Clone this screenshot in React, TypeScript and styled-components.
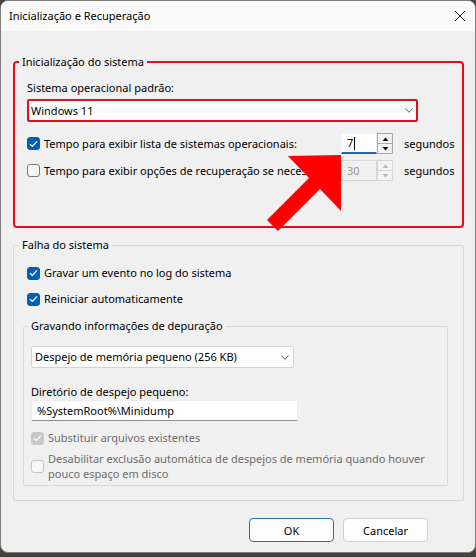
import React from "react";
import styled, { createGlobalStyle } from "styled-components";

const GlobalStyle = createGlobalStyle`
  html, body { margin: 0; padding: 0; }
  body {
    background: #47403e;
    font-family: "Noto Sans", "Open Sans", sans-serif;
    font-size: 11px;
    color: #000;
  }
  *, *::before, *::after { box-sizing: border-box; }
`;

const Window = styled.div`
  position: relative;
  width: 476px;
  height: 553px;
  background: #f0f0f0;
  border: 1px solid #7d7d7d;
  border-radius: 8px;
  overflow: hidden;
  display: flex;
  flex-direction: column;
`;

const TitleBar = styled.div`
  height: 30px;
  flex: none;
  display: flex;
  align-items: center;
  justify-content: space-between;
  padding: 0 9px 0 8px;
  background: #fafafa;
  font-size: 11px;
  line-height: 16px;
`;

const CloseButton = styled.span`
  display: flex;
  width: 12px;
  height: 12px;
`;

const Body = styled.div`
  flex: 1;
  display: flex;
  flex-direction: column;
  padding: 23px 11px 10px 12px;
`;

const GroupBox = styled.fieldset<{ $accent?: boolean }>`
  margin: 0;
  min-width: 0;
  display: flex;
  flex-direction: column;
  align-items: flex-start;
  border: ${(p) => (p.$accent ? "2px solid #e3101c" : "1px solid #d9d9d9")};
  border-radius: ${(p) => (p.$accent ? "4px" : "2px")};
`;

const BootGroup = styled(GroupBox)`
  padding: 10px 6px 45px 12px;
`;

const CrashGroup = styled(GroupBox)`
  margin-top: 9px;
  padding: 12px 15px 14px 9px;
`;

const DebugGroup = styled(GroupBox)`
  margin-top: 11px;
  align-self: stretch;
  padding: 12px 4px 4px 7px;
`;

const Legend = styled.legend<{ $offset: number }>`
  padding: 0 3px;
  margin-left: ${(p) => p.$offset}px;
  line-height: 16px;
  font-size: 11px;
`;

const FieldLabel = styled.div<{ $gap?: number }>`
  line-height: 16px;
  margin-top: ${(p) => p.$gap ?? 0}px;
`;

const Select = styled.div<{ $width: number; $accent?: boolean; $gap?: number }>`
  width: ${(p) => p.$width}px;
  height: ${(p) => (p.$accent ? 23 : 22)}px;
  margin-top: ${(p) => p.$gap ?? 0}px;
  display: flex;
  align-items: center;
  justify-content: space-between;
  background: #fdfdfd;
  border: ${(p) => (p.$accent ? "2px solid #e3101c" : "1px solid #d3d3d3")};
  border-radius: 2px;
  padding: ${(p) => (p.$accent ? "0 3px 0 2px" : "0 4px 0 3px")};
  line-height: 16px;
`;

const Chevron = styled.svg`
  flex: none;
`;

const OptionRow = styled.div<{ $gap: number }>`
  align-self: stretch;
  height: 21px;
  margin-top: ${(p) => p.$gap}px;
  display: flex;
  align-items: center;
`;

const Choice = styled.label<{ $disabled?: boolean; $gap?: number; $indent?: number }>`
  display: flex;
  align-items: center;
  gap: 4px;
  min-width: 0;
  flex: 1;
  line-height: 16px;
  margin-top: ${(p) => p.$gap ?? 0}px;
  padding-left: ${(p) => p.$indent ?? 0}px;
  color: ${(p) => (p.$disabled ? "#6d6d6d" : "#000")};
`;

const ChoiceText = styled.span<{ $clip?: boolean; $lineHeight?: number }>`
  min-width: 0;
  line-height: ${(p) => p.$lineHeight ?? 16}px;
  ${(p) => (p.$clip ? "white-space: nowrap; overflow: hidden;" : "")}
`;

const Box = styled.span<{ $checked?: boolean; $disabled?: boolean }>`
  flex: none;
  width: 13px;
  height: 13px;
  border-radius: 3px;
  display: flex;
  align-items: center;
  justify-content: center;
  background: ${(p) =>
    p.$checked ? (p.$disabled ? "#c8c8c8" : "#005fb8") : p.$disabled ? "#f7f7f7" : "#f6f6f6"};
  border: 1px solid
    ${(p) =>
      p.$checked ? (p.$disabled ? "#c8c8c8" : "#005fb8") : p.$disabled ? "#c6c6c6" : "#7a7a7a"};
`;

const Spinner = styled.div`
  flex: none;
  display: flex;
  height: 21px;
  margin-left: 6px;
`;

const SpinField = styled.div<{ $disabled?: boolean }>`
  width: 36px;
  height: 100%;
  display: flex;
  align-items: center;
  padding-left: 5px;
  line-height: 16px;
  background: ${(p) => (p.$disabled ? "#f0f0f0" : "#ffffff")};
  color: ${(p) => (p.$disabled ? "#9a9a9a" : "#000")};
  border: 1px solid ${(p) => (p.$disabled ? "#d8d8d8" : "#f4f4f4")};
  border-bottom: ${(p) => (p.$disabled ? "1px solid #d8d8d8" : "2px solid #1f65ad")};
`;

const Caret = styled.span`
  display: inline-block;
  width: 1px;
  height: 13px;
  margin-left: 1px;
  background: #000;
`;

const SpinButtons = styled.div`
  width: 16px;
  display: flex;
  flex-direction: column;
`;

const SpinButton = styled.div<{ $disabled?: boolean }>`
  flex: 1;
  display: flex;
  align-items: center;
  justify-content: center;
  background: #f4f4f4;
  border: 1px solid ${(p) => (p.$disabled ? "#d6d6d6" : "#a9a9a9")};
  & + & {
    border-top: none;
  }
`;

const Unit = styled.span`
  flex: none;
  width: 52px;
  margin-left: 11px;
  line-height: 16px;
`;

const TextInput = styled.div`
  width: 267px;
  height: 21px;
  display: flex;
  align-items: center;
  padding-left: 5px;
  background: #ffffff;
  border: 1px solid #ececec;
  border-bottom: 1px solid #8d8d8d;
  border-radius: 2px;
  line-height: 16px;
`;

const ButtonBar = styled.div`
  display: flex;
  justify-content: flex-end;
  gap: 9px;
  margin-top: 17px;
  padding-right: 36px;
`;

const DialogButton = styled.button<{ $primary?: boolean }>`
  width: 85px;
  height: 24px;
  font: inherit;
  font-size: 11px;
  color: #000;
  background: #fdfdfd;
  border: 1px solid ${(p) => (p.$primary ? "#2a6db0" : "#d1d1d1")};
  border-radius: 4px;
  padding: 0;
`;

const ArrowMark = styled.svg`
  position: absolute;
  left: 259px;
  top: 149px;
  pointer-events: none;
`;

const Check = ({ color = "#fff" }: { color?: string }) => (
  <svg width="9" height="8" viewBox="0 0 9 8">
    <path d="M1 4.2 L3.4 6.4 L8 1.4" fill="none" stroke={color} strokeWidth="1.3" />
  </svg>
);

const Checkbox = ({ checked, disabled }: { checked?: boolean; disabled?: boolean }) => (
  <Box $checked={checked} $disabled={disabled}>
    {checked ? <Check /> : null}
  </Box>
);

const Down = ({ w = 8 }: { w?: number }) => (
  <Chevron width={w} height="5" viewBox={`0 0 ${w} 5`}>
    <path d={`M0.5 0.5 L${w / 2} 4.3 L${w - 0.5} 0.5`} fill="none" stroke="#5a5a5a" strokeWidth="1" />
  </Chevron>
);

const Tri = ({ up, color }: { up?: boolean; color: string }) => (
  <svg width="7" height="4" viewBox="0 0 7 4">
    <path d={up ? "M0.5 4 L3.5 0.5 L6.5 4 Z" : "M0.5 0 L3.5 3.5 L6.5 0 Z"} fill={color} />
  </svg>
);

const SpinBox = ({ value, disabled, caret }: { value: string; disabled?: boolean; caret?: boolean }) => (
  <Spinner>
    <SpinField $disabled={disabled}>
      {value}
      {caret ? <Caret /> : null}
    </SpinField>
    <SpinButtons>
      <SpinButton $disabled={disabled}>
        <Tri up color={disabled ? "#b8b8b8" : "#111"} />
      </SpinButton>
      <SpinButton $disabled={disabled}>
        <Tri color={disabled ? "#b8b8b8" : "#111"} />
      </SpinButton>
    </SpinButtons>
  </Spinner>
);

export default function App() {
  return (
    <>
      <GlobalStyle />
      <Window>
        <TitleBar>
          <span>Inicialização e Recuperação</span>
          <CloseButton>
            <svg width="12" height="12" viewBox="0 0 12 12">
              <path d="M1 1 L11 11 M11 1 L1 11" stroke="#1b1b1b" strokeWidth="1" fill="none" />
            </svg>
          </CloseButton>
        </TitleBar>
        <Body>
          <BootGroup $accent>
            <Legend $offset={-8}>Inicialização do sistema</Legend>
            <FieldLabel>Sistema operacional padrão:</FieldLabel>
            <Select $width={391} $accent $gap={3}>
              <span>Windows 11</span>
              <Down />
            </Select>
            <OptionRow $gap={11}>
              <Choice>
                <Checkbox checked />
                <ChoiceText $clip>Tempo para exibir lista de sistemas operacionais:</ChoiceText>
              </Choice>
              <SpinBox value="7" caret />
              <Unit>segundos</Unit>
            </OptionRow>
            <OptionRow $gap={6}>
              <Choice>
                <Checkbox />
                <ChoiceText $clip>Tempo para exibir opções de recuperação se necessário:</ChoiceText>
              </Choice>
              <SpinBox value="30" disabled />
              <Unit>segundos</Unit>
            </OptionRow>
          </BootGroup>

          <CrashGroup>
            <Legend $offset={-4}>Falha do sistema</Legend>
            <Choice $indent={4}>
              <Checkbox checked />
              <ChoiceText>Gravar um evento no log do sistema</ChoiceText>
            </Choice>
            <Choice $indent={4} $gap={10}>
              <Checkbox checked />
              <ChoiceText>Reiniciar automaticamente</ChoiceText>
            </Choice>
            <DebugGroup>
              <Legend $offset={-3}>Gravando informações de depuração</Legend>
              <Select $width={263}>
                <span>Despejo de memória pequeno (256 KB)</span>
                <Down w={8} />
              </Select>
              <FieldLabel $gap={16}>Diretório de despejo pequeno:</FieldLabel>
              <TextInput>%SystemRoot%\Minidump</TextInput>
              <Choice $disabled $gap={9}>
                <Checkbox checked disabled />
                <ChoiceText>Substituir arquivos existentes</ChoiceText>
              </Choice>
              <Choice $disabled $gap={5}>
                <Checkbox disabled />
                <ChoiceText $lineHeight={15}>
                  Desabilitar exclusão automática de despejos de memória quando houver
                  <br />
                  pouco espaço em disco
                </ChoiceText>
              </Choice>
            </DebugGroup>
          </CrashGroup>

          <ButtonBar>
            <DialogButton $primary>OK</DialogButton>
            <DialogButton>Cancelar</DialogButton>
          </ButtonBar>
        </Body>
        <ArrowMark width="90" height="86" viewBox="0 0 90 86">
          <polygon
            points="81,5 81,61 60,39 18,81 7,70 49,28 28,6"
            fill="#ff0000"
          />
        </ArrowMark>
      </Window>
    </>
  );
}
